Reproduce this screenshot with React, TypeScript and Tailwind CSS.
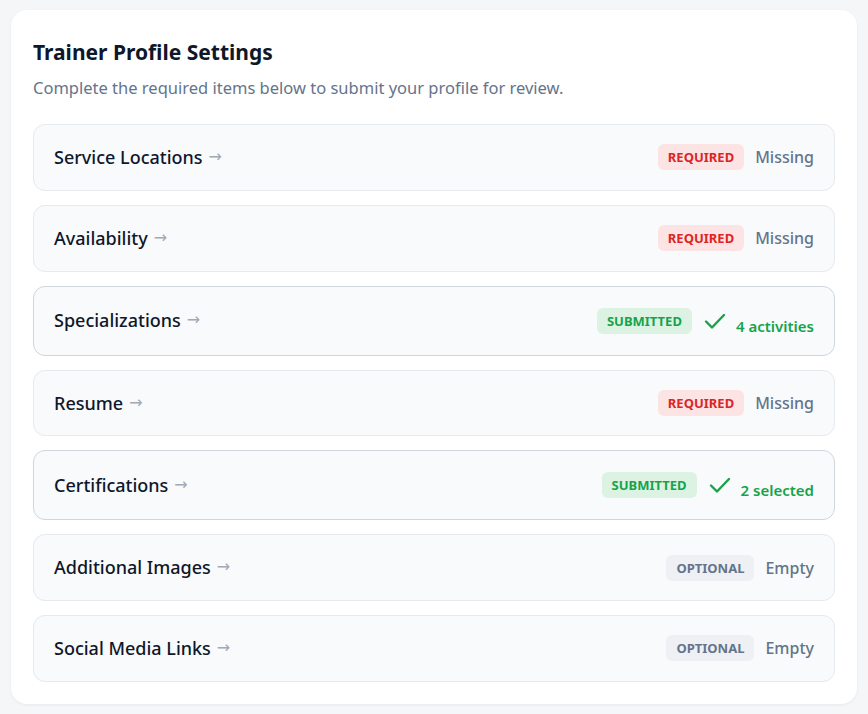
import React from "react";

type Status = "required" | "submitted" | "optional";

type Item = {
  label: string;
  status: Status;
  note: string;
};

const items: Item[] = [
  { label: "Service Locations", status: "required", note: "Missing" },
  { label: "Availability", status: "required", note: "Missing" },
  { label: "Specializations", status: "submitted", note: "4 activities" },
  { label: "Resume", status: "required", note: "Missing" },
  { label: "Certifications", status: "submitted", note: "2 selected" },
  { label: "Additional Images", status: "optional", note: "Empty" },
  { label: "Social Media Links", status: "optional", note: "Empty" },
];

const Check = () => (
  <svg
    width="24"
    height="24"
    viewBox="0 0 24 24"
    fill="none"
    stroke="#16a34a"
    strokeWidth="2.4"
    strokeLinecap="round"
    strokeLinejoin="round"
  >
    <path d="M3 12.5l6 6L21 6" />
  </svg>
);

const Badge = ({ status }: { status: Status }) => {
  if (status === "required") {
    return (
      <span className="rounded-md bg-[#fde4e4] px-[10px] py-[4px] text-[13px] font-bold leading-[18px] text-[#dc2626]">
        REQUIRED
      </span>
    );
  }
  if (status === "submitted") {
    return (
      <span className="rounded-md bg-[#dcf3e4] px-[10px] py-[4px] text-[13px] font-bold leading-[18px] text-[#16a34a]">
        SUBMITTED
      </span>
    );
  }
  return (
    <span className="rounded-md bg-[#eef0f3] px-[10px] py-[4px] text-[13px] font-bold leading-[18px] text-[#64748b]">
      OPTIONAL
    </span>
  );
};

const Row = ({ item }: { item: Item }) => {
  const done = item.status === "submitted";
  return (
    <div
      className={`flex items-center justify-between rounded-xl border bg-[#f8fafc] px-5 py-[19px] ${
        done ? "border-[#cfd6de]" : "border-[#e6e9ee]"
      }`}
    >
      <div className="flex items-center gap-[6px] text-[18px] font-medium leading-[26.75px] text-[#0f172a]">
        <span>{item.label}</span>
        <span
          className="text-[16px] text-[#a3a9b3]"
          style={{ fontFamily: '"DejaVu Sans", sans-serif' }}
        >
          →
        </span>
      </div>
      <div className="flex items-center gap-[11px]">
        <Badge status={item.status} />
        {done ? (
          <div className="flex items-center gap-[9px]">
            <Check />
            <span className="mt-[10px] text-[15px] font-semibold leading-5 text-[#16a34a]">
              {item.note}
            </span>
          </div>
        ) : (
          <span className="text-[16px] font-medium leading-[26px] text-[#64748b]">
            {item.note}
          </span>
        )}
      </div>
    </div>
  );
};

export default function App() {
  return (
    <div
      className="min-h-screen bg-[#f4f6f8] px-[11px] py-[10px]"
      style={{ fontFamily: '"Noto Sans", "Open Sans", sans-serif' }}
    >
      <div className="rounded-2xl bg-white px-[22px] pb-[22px] pt-[28px] shadow-[0_1px_3px_rgba(15,23,42,0.06)]">
        <h1 className="text-[21px] font-bold leading-7 text-[#0f172a]">
          Trainer Profile Settings
        </h1>
        <p className="mt-[10px] text-[16.5px] leading-6 text-[#64748b]">
          Complete the required items below to submit your profile for review.
        </p>
        <div className="mt-[24px] flex flex-col gap-[14px]">
          {items.map((item) => (
            <Row key={item.label} item={item} />
          ))}
        </div>
      </div>
    </div>
  );
}
